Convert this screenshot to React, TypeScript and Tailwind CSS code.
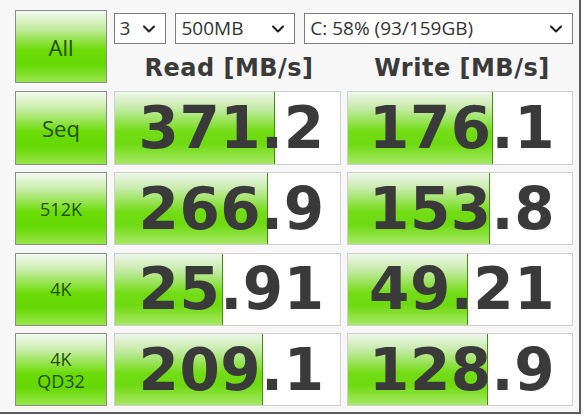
import { Fragment } from 'react';
import { ChevronDown } from 'lucide-react';

interface Result {
  label: string[];
  read: number;
  write: number;
  readFill: number;
  writeFill: number;
}

const results: Result[] = [
  { label: ['Seq'], read: 371.2, write: 176.1, readFill: 160, writeFill: 145 },
  { label: ['512K'], read: 266.9, write: 153.8, readFill: 153, writeFill: 142 },
  { label: ['4K'], read: 25.91, write: 49.21, readFill: 108, writeFill: 120 },
  { label: ['4K', 'QD32'], read: 209.1, write: 128.9, readFill: 148, writeFill: 140 },
];

const fmt = (v: number) => (v >= 100 ? v.toFixed(1) : v.toFixed(2));

function GreenButton({ lines, big }: { lines: string[]; big?: boolean }) {
  return (
    <div className="flex h-full w-[92px] flex-col items-center justify-center border border-[#8c8c8c] bg-[linear-gradient(to_bottom,#f4f9f1_0%,#c3ec9f_25%,#6cdc08_55%,#64d804_75%,#98e648_100%)] leading-[22px] text-[#24500a]">
      {lines.map((l) => (
        <span
          key={l}
          className={big ? 'text-[22px] font-["Open_Sans",sans-serif]' : 'text-[18px] font-["Open_Sans",sans-serif]'}
        >
          {l}
        </span>
      ))}
    </div>
  );
}

function ValueCell({ value, fill, pad }: { value: number; fill: number; pad: string }) {
  return (
    <div className="relative h-full overflow-hidden border border-[#cfcfcf] bg-white">
      <div
        className="absolute inset-y-0 left-0 border-r border-[#3f8f0a] bg-[linear-gradient(to_bottom,#eef6ea_0%,#c6ebaa_22%,#72dc14_55%,#6eda10_72%,#a6e866_100%)]"
        style={{ width: fill }}
      />
      <div
        className={`relative flex h-full items-center justify-end ${pad} font-["DejaVu_Sans",sans-serif] text-[58px] font-bold leading-none tracking-[0.5px] text-[#3a3a3a]`}
      >
        {fmt(value)}
      </div>
    </div>
  );
}

function Select({ text, width }: { text: string; width: string }) {
  return (
    <div
      className={`flex h-[31px] ${width} items-center justify-between border border-[#7d7d7d] bg-white pl-[5px] pr-[6px] font-["Open_Sans",sans-serif] text-[19px] text-[#333]`}
    >
      <span>{text}</span>
      <ChevronDown size={20} strokeWidth={2.4} className="text-[#1e1e1e]" />
    </div>
  );
}

export default function App() {
  return (
    <div className="h-[417px] w-[584px] bg-white">
      <div className="h-[414px] w-[581px] border-r-2 border-b-2 border-[#5c5c5c] bg-[#f7f7f7] pl-[15px] pt-[10px]">
        <div className="grid grid-cols-[92px_227px_226px] grid-rows-[73px_74px_73px_73px_73px] gap-x-[6.5px] gap-y-[7.5px]">
          {/* Top row */}
          <GreenButton lines={['All']} big />
          <div className="col-span-2 flex flex-col">
            <div className="mt-[3px] flex gap-[9px]">
              <Select text="3" width="w-[53px]" />
              <Select text="500MB" width="w-[120px]" />
              <Select text="C: 58% (93/159GB)" width="w-[269px]" />
            </div>
            <div className="mt-[6px] grid grid-cols-[227px_226px] gap-x-[6.5px] font-['DejaVu_Sans',sans-serif] text-[24px] font-bold tracking-[0.5px] text-[#3a3a3a]">
              <div className="pl-[4px] text-center">Read [MB/s]</div>
              <div className="pl-[4px] text-center">Write [MB/s]</div>
            </div>
          </div>

          {results.map((r) => (
            <Fragment key={r.label.join()}>
              <GreenButton lines={r.label} big={r.label[0] === 'Seq'} />
              <ValueCell value={r.read} fill={r.readFill} pad="pr-[15px]" />
              <ValueCell value={r.write} fill={r.writeFill} pad="pr-[17px]" />
            </Fragment>
          ))}
        </div>
      </div>
    </div>
  );
}
